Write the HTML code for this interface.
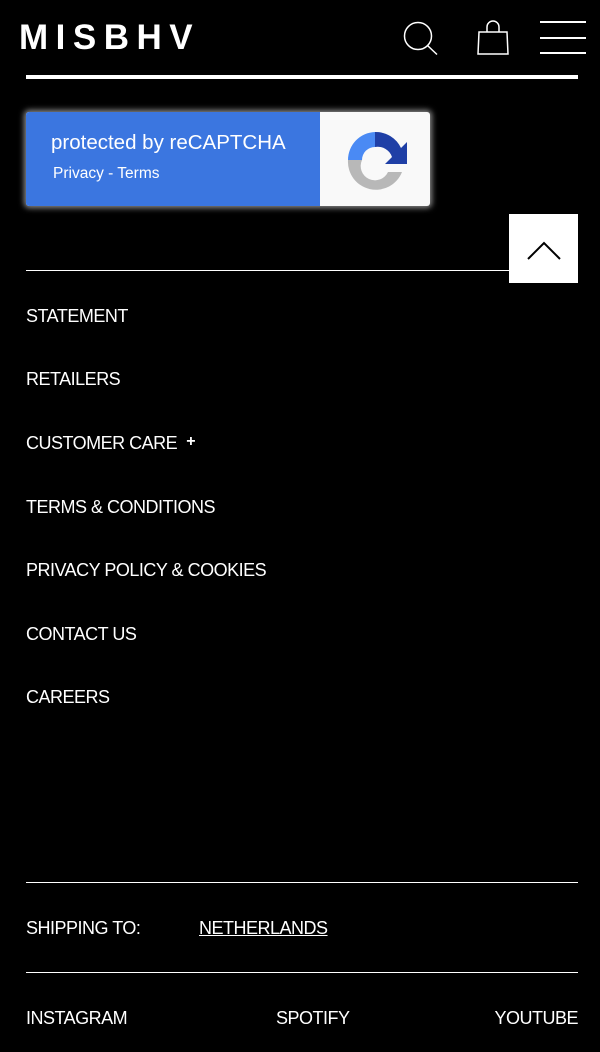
<!DOCTYPE html>
<html><head><meta charset="utf-8"><style>
*{margin:0;padding:0;box-sizing:border-box}
body{width:600px;height:1052px;background:#000;color:#fff;font-family:"Liberation Sans",Arial,sans-serif;position:relative;overflow:hidden}
.a{position:absolute}
.logo{left:19px;top:18px;font-size:35px;font-weight:bold;letter-spacing:7.5px;line-height:40px}
.hr{left:26px;width:552px;background:#fff}
.menu{left:26px;font-size:18px;letter-spacing:-0.5px;line-height:20px}
</style></head><body>
<div class="a logo">MISBHV</div>
<svg class="a" style="left:402px;top:20px" width="38" height="36" viewBox="0 0 38 36"><circle cx="16" cy="16" r="13.5" fill="none" stroke="#fff" stroke-width="1.5"/><line x1="25.5" y1="25.5" x2="35" y2="34.5" stroke="#fff" stroke-width="1.5"/></svg>
<svg class="a" style="left:474px;top:20px" width="38" height="36" viewBox="0 0 38 36"><path d="M5 12 H33 L34 34 H4 Z" fill="none" stroke="#fff" stroke-width="1.5"/><path d="M13 12 V7 A6 6 0 0 1 25 7 V12" fill="none" stroke="#fff" stroke-width="1.5"/></svg>
<div class="a" style="left:540px;top:21px;width:46px;height:2px;background:#fff"></div>
<div class="a" style="left:540px;top:37px;width:46px;height:2px;background:#fff"></div>
<div class="a" style="left:540px;top:52px;width:46px;height:2px;background:#fff"></div>
<div class="a hr" style="top:75px;height:4px"></div>
<div class="a" style="left:26px;top:112px;width:404px;height:94px;border-radius:3px;overflow:hidden;box-shadow:0 0 6px 2px rgba(255,255,255,.55);background:#f9f9f9">
<div class="a" style="left:0;top:0;width:294px;height:94px;background:#3b76e0"></div>
<div class="a" style="left:25px;top:19px;font-size:20.5px;color:#fff">protected by reCAPTCHA</div>
<div class="a" style="left:27px;top:53px;font-size:15.5px;color:#fff">Privacy - Terms</div>
<svg class="a" style="left:314px;top:14px" width="70" height="70" viewBox="0 0 70 70">
<path d="M35 6 A28 28 0 0 0 8 34 H22 A13 13 0 0 1 35 21 Z" fill="#4a8af4"/>
<path d="M35 6 A28 28 0 0 1 61 22 L67 16 V38 H45 L52 31 A15 15 0 0 0 35 21 Z" fill="#1f3fa6"/>
<path d="M8 34 A28 28 0 0 0 62 46 H48 A14 14 0 0 1 22 34 Z" fill="#b8b8b8"/>
</svg>
</div>
<div class="a hr" style="top:270px;height:1px"></div>
<div class="a" style="left:509px;top:214px;width:69px;height:69px;background:#fff"></div>
<svg class="a" style="left:509px;top:214px" width="69" height="69"><path d="M19 45 L35 29 L51 45" fill="none" stroke="#000" stroke-width="2"/></svg>
<div class="a menu" style="top:306px">STATEMENT</div>
<div class="a menu" style="top:369px">RETAILERS</div>
<div class="a menu" style="top:433px">CUSTOMER CARE &nbsp;<span style="font-size:16px;font-weight:bold;position:relative;top:-3px">+</span></div>
<div class="a menu" style="top:497px">TERMS &amp; CONDITIONS</div>
<div class="a menu" style="top:560px">PRIVACY POLICY &amp; COOKIES</div>
<div class="a menu" style="top:624px">CONTACT US</div>
<div class="a menu" style="top:687px">CAREERS</div>
<div class="a hr" style="top:882px;height:1px"></div>
<div class="a menu" style="top:918px">SHIPPING TO:</div>
<div class="a menu" style="top:918px;left:199px;text-decoration:underline">NETHERLANDS</div>
<div class="a hr" style="top:972px;height:1px"></div>
<div class="a menu" style="top:1008px">INSTAGRAM</div>
<div class="a menu" style="top:1008px;left:276px">SPOTIFY</div>
<div class="a menu" style="top:1008px;left:auto;right:22px">YOUTUBE</div>
</body></html>
